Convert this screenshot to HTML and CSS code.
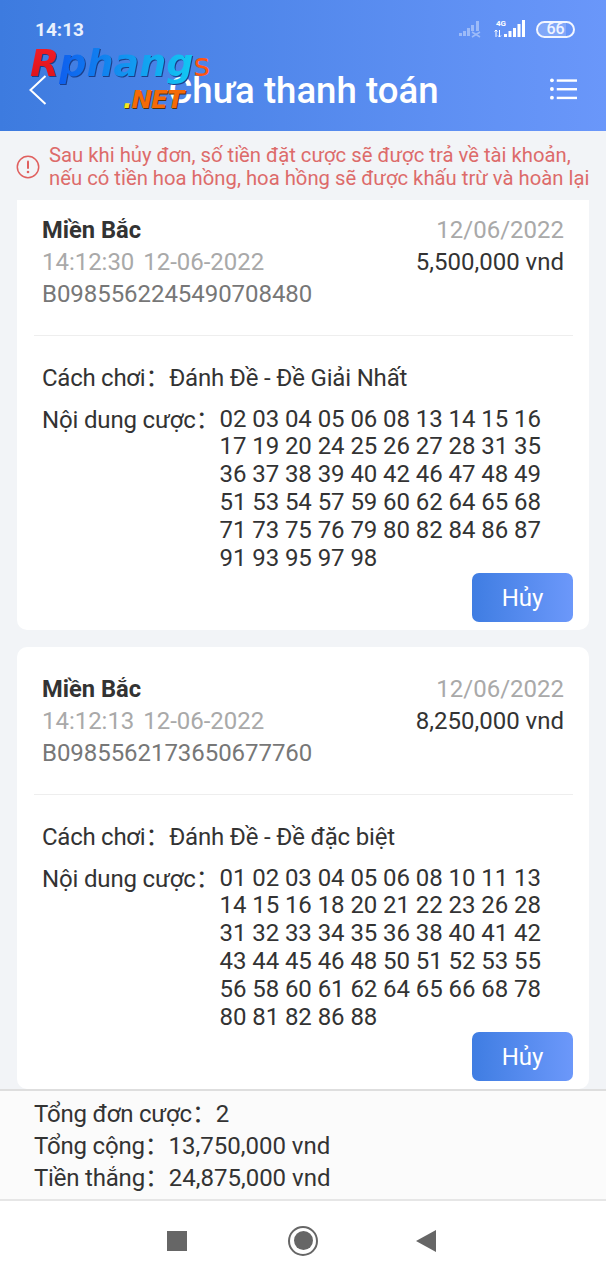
FILE: index.html
```html
<!DOCTYPE html>
<html lang="vi">
<head>
<meta charset="utf-8">
<title>Chưa thanh toán</title>
<link rel="stylesheet" href="styles.css">
</head>
<body>
<div class="page">
  <header class="header">
    <div class="status">
      <span class="time">14:13</span>
      <div class="status-icons">
        <svg class="sig-off" width="26" height="18" viewBox="0 0 26 18"><g fill="#fff" opacity=".38"><rect x="1" y="13" width="3" height="3"/><rect x="5" y="11" width="3" height="5"/><rect x="9" y="8" width="3" height="8"/><rect x="13" y="5" width="3" height="6"/><rect x="18" y="1" width="3" height="10"/></g><path d="M14 12l8 5M22 12l-8 5" stroke="#fff" stroke-width="1.500" opacity=".38"/></svg>
        <svg class="sig-on" width="34" height="20" viewBox="0 0 34 20"><text x="3" y="7" class="sig-4g">4G</text><path d="M3 11v7M1.500 12.500L3 11l1.500 1.500M6.500 18v-7M5 16.500L6.500 18 8 16.500" stroke="#fff" stroke-width="1" fill="none"/><g fill="#fff"><rect x="11" y="15" width="3" height="3"/><rect x="15.500" y="12" width="3" height="6"/><rect x="20" y="9" width="3" height="9"/><rect x="24.500" y="5" width="3" height="13"/><rect x="29" y="1" width="3" height="17"/></g></svg>
        <div class="battery"><span class="battery-fill"></span><span class="battery-num">66</span></div>
      </div>
    </div>
    <div class="titlebar">
      <svg class="back" width="18" height="30" viewBox="0 0 18 30"><path d="M16.500 1L1.500 15 16.500 29" fill="none" stroke="#fff" stroke-width="2"/></svg>
      <h1 class="title">Chưa thanh toán</h1>
      <svg class="menu" width="28" height="22" viewBox="0 0 28 22"><g fill="#fff"><circle cx="2" cy="2" r="2"/><circle cx="2" cy="11" r="2"/><circle cx="2" cy="20" r="2"/><rect x="7" y="1" width="21" height="2.500"/><rect x="7" y="10" width="21" height="2.500"/><rect x="7" y="19" width="21" height="2.500"/></g></svg>
    </div>
    <div class="logo">
      <span class="logo-main"><span class="logo-r">R</span><span class="logo-p">phang</span><span class="logo-s">s</span></span>
      <span class="logo-net"><span class="logo-dot">.</span>NET</span>
    </div>
  </header>

  <div class="notice">
    <svg class="notice-icon" width="24" height="24" viewBox="0 0 24 24"><circle cx="12" cy="12" r="10.700" fill="none" stroke="#e0605f" stroke-width="1.500"/><rect x="11" y="5.500" width="2" height="8.500" rx="1" fill="#e0605f"/><circle cx="12" cy="17" r="1.300" fill="#e0605f"/></svg>
    <p class="notice-text">Sau khi hủy đơn, số tiền đặt cược sẽ được trả về tài khoản, nếu có tiền hoa hồng, hoa hồng sẽ được khấu trừ và hoàn lại</p>
  </div>

  <main class="list">
    <article class="card">
      <div class="card-head">
        <div>
          <div class="region">Miền Bắc</div>
          <div class="stamp">14:12:30 <span class="stamp-date">12-06-2022</span></div>
          <div class="code">B0985562245490708480</div>
        </div>
        <div class="head-right">
          <div class="date">12/06/2022</div>
          <div class="amount">5,500,000 vnd</div>
        </div>
      </div>
      <div class="card-body">
        <div class="row"><span class="label label-play">Cách chơi：</span><span class="value">Đánh Đề - Đề Giải Nhất</span></div>
        <div class="row row-nums"><span class="label">Nội dung cược：</span><span class="nums">02 03 04 05 06 08 13 14 15 16 17 19 20 24 25 26 27 28 31 35 36 37 38 39 40 42 46 47 48 49 51 53 54 57 59 60 62 64 65 68 71 73 75 76 79 80 82 84 86 87 91 93 95 97 98</span></div>
      </div>
      <div class="card-foot"><button class="cancel" type="button">Hủy</button></div>
    </article>

    <article class="card">
      <div class="card-head">
        <div>
          <div class="region">Miền Bắc</div>
          <div class="stamp">14:12:13 <span class="stamp-date">12-06-2022</span></div>
          <div class="code">B0985562173650677760</div>
        </div>
        <div class="head-right">
          <div class="date">12/06/2022</div>
          <div class="amount">8,250,000 vnd</div>
        </div>
      </div>
      <div class="card-body">
        <div class="row"><span class="label label-play">Cách chơi：</span><span class="value">Đánh Đề - Đề đặc biệt</span></div>
        <div class="row row-nums"><span class="label">Nội dung cược：</span><span class="nums">01 02 03 04 05 06 08 10 11 13 14 15 16 18 20 21 22 23 26 28 31 32 33 34 35 36 38 40 41 42 43 44 45 46 48 50 51 52 53 55 56 58 60 61 62 64 65 66 68 78 80 81 82 86 88</span></div>
      </div>
      <div class="card-foot"><button class="cancel" type="button">Hủy</button></div>
    </article>
  </main>

  <section class="summary">
    <div class="sum-row"><span class="sum-label">Tổng đơn cược：</span>2</div>
    <div class="sum-row"><span class="sum-label">Tổng cộng：</span>13,750,000 vnd</div>
    <div class="sum-row"><span class="sum-label">Tiền thắng：</span>24,875,000 vnd</div>
  </section>

  <nav class="navbar">
    <span class="nav-square"></span>
    <span class="nav-circle"><span class="nav-dot"></span></span>
    <span class="nav-back"></span>
  </nav>
</div>
</body>
</html>
```
FILE: styles.css
```css
* { box-sizing: border-box; }
html, body { margin: 0; padding: 0; }
body {
  font-family: Roboto, "Noto Sans CJK SC", sans-serif;
  color: #333;
  background: #f2f4f7;
}
.page {
  width: 606px;
  height: 1280px;
  display: flex;
  flex-direction: column;
  overflow: hidden;
}
.header {
  position: relative;
  flex: none;
  height: 131px;
  background: linear-gradient(90deg, #3d7bdf 0%, #6a97fa 100%);
  color: #fff;
  padding: 0 29px 0 30px;
}
.status {
  height: 60px;
  display: flex;
  align-items: flex-start;
  justify-content: space-between;
  padding: 19px 2px 0 5px;
}
.time { font-size: 19px; line-height: 21px; font-weight: 700; color: #e9f1fd; }
.status-icons { display: flex; align-items: center; gap: 9px; }
.sig-4g { font: 700 8px Roboto, sans-serif; fill: #fff; }
.battery {
  position: relative;
  width: 39px;
  height: 17px;
  border: 2px solid #f2f6ff;
  border-radius: 9px;
  display: flex;
  align-items: center;
  justify-content: center;
  overflow: hidden;
}
.battery-fill { position: absolute; left: 0; top: 0; bottom: 0; width: 80%; background: rgba(255,255,255,.18); }
.battery-num { position: relative; font-size: 16px; font-weight: 500; line-height: 14px; color: #eef3ff; }
.titlebar {
  height: 62px;
  display: grid;
  grid-template-columns: 1fr auto 1fr;
  align-items: center;
}
.back { margin: -2px 0 0 -1px; justify-self: start; }
.title { margin: 0; font-size: 36.600px; font-weight: 500; line-height: 62px; color: #fff; }
.menu { justify-self: end; margin-top: -4px; width: 27px; }
.logo {
  position: absolute;
  left: 30px;
  top: 38px;
  width: 190px;
  height: 74px;
  font-family: "DejaVu Sans", sans-serif;
  font-style: italic;
  font-weight: 700;
}
.logo-main { display: flex; align-items: baseline; font-size: 38px; line-height: 50px; white-space: nowrap; }
.logo-r {
  background: linear-gradient(180deg, #f8202a, #d81018);
  -webkit-background-clip: text;
  background-clip: text;
  color: transparent;
  filter: drop-shadow(1px 1px 0 #1a3f8a);
}
.logo-p {
  background: linear-gradient(90deg, #0e5fee 0%, #1294f0 50%, #12c8f2 100%);
  -webkit-background-clip: text;
  background-clip: text;
  color: transparent;
  filter: drop-shadow(1px 1px 0 #1a3f8a);
}
.logo-s { color: #ff5510; font-style: normal; font-weight: 400; font-size: 32px; }
.logo-net { position: absolute; left: 93px; top: 50px; font-size: 25px; line-height: 24px; letter-spacing: -1.200px; color: #f56a08; white-space: nowrap; text-shadow: 1px 1px 0 #4a3210; }
.logo-dot { color: #f8e71c; }
.notice {
  flex: none;
  height: 69px;
  display: flex;
  align-items: center;
  gap: 9px;
  padding: 2px 0 0 16px;
}
.notice-icon { flex: none; }
.notice-text { margin: 0; width: 545px; font-size: 20.280px; line-height: 23px; color: #dd6b6a; }
.list {
  flex: 1;
  min-height: 0;
  overflow: hidden;
  padding: 0 17px;
  display: flex;
  flex-direction: column;
  gap: 17px;
}
.card {
  flex: none;
  background: #fff;
  border-radius: 10px;
  height: 442px;
  display: flex;
  flex-direction: column;
  padding: 26px 16px 8px 17px;
}
.card:first-child { margin-top: -12px; }
.card-head {
  height: 122px;
  display: flex;
  justify-content: space-between;
  padding: 0 9px 0 8px;
  border-bottom: 1px solid #eee;
  font-size: 24px;
  line-height: 32px;
}
.region { font-weight: 700; color: #333; font-size: 23.700px; }
.stamp { color: #a9a9a9; letter-spacing: -.03px; }
.stamp-date { margin-left: 3px; }
.code { color: #777; letter-spacing: -.05px; }
.head-right { text-align: right; }
.date { color: #a9a9a9; }
.amount { color: #333; }
.card-body { padding: 26px 8px 0; font-size: 24px; color: #333; }
.row { display: flex; line-height: 32px; }
.row-nums { margin-top: 10px; }
.label { flex: none; letter-spacing: -.16px; }
.label-play { letter-spacing: -.26px; }
.value { flex: none; letter-spacing: -.18px; }
.nums { width: 344px; line-height: 27.900px; padding-top: 2px; letter-spacing: -.07px; }
.card-foot { margin-top: auto; display: flex; justify-content: flex-end; }
.cancel {
  width: 101px;
  height: 49px;
  border: 0;
  border-radius: 7px;
  background: linear-gradient(90deg, #3f7de2, #6c98fa);
  color: #fff;
  font: 24px Roboto, sans-serif;
  padding: 0;
}
.summary {
  flex: none;
  height: 112px;
  background: #fbfbfb;
  border-top: 2px solid #dedede;
  border-bottom: 2px solid #e6e6e6;
  padding: 7px 34px 0;
  font-size: 24px;
  line-height: 32px;
  color: #333;
}
.sum-label { letter-spacing: -.2px; }
.navbar {
  flex: none;
  height: 79px;
  background: #fff;
  display: flex;
  align-items: center;
  justify-content: center;
  padding-right: 3px;
}
.nav-square { width: 20px; height: 20px; background: #666; margin-right: 101px; }
.nav-circle {
  width: 30px;
  height: 30px;
  border: 2.500px solid #666;
  border-radius: 50%;
  display: flex;
  align-items: center;
  justify-content: center;
  margin-right: 98px;
}
.nav-dot { width: 19px; height: 19px; border-radius: 50%; background: #666; }
.nav-back {
  width: 0;
  height: 0;
  border-top: 11px solid transparent;
  border-bottom: 11px solid transparent;
  border-right: 20px solid #666;
}
```
